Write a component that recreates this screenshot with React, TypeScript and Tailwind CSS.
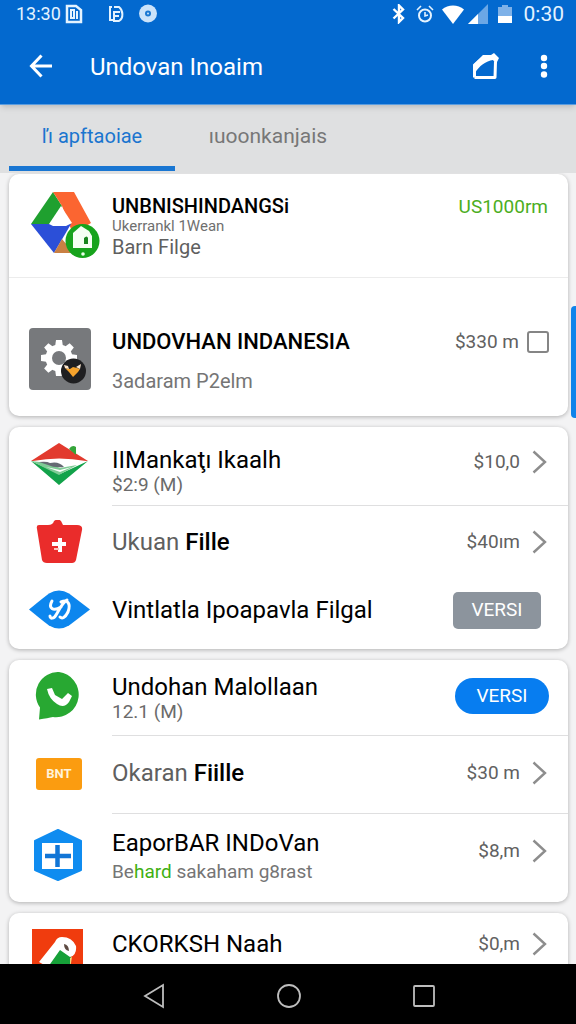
import { ReactNode } from "react";
import clsx from "clsx";

const tabs = [
  { id: "app", label: "ľı apftaoiae", active: true },
  { id: "other", label: "ıuoonkanjais", active: false },
];

function StatusBar() {
  return (
    <div className="h-7 pl-4 pr-3 flex items-center justify-between text-lg leading-7 text-[#e4f3ff]">
      <div className="flex items-center">
        <span className="w-[49px]">13:30</span>
        <svg width="18" height="20" viewBox="0 0 18 20" fill="none">
          <path d="M2 2h9l5 4v12H2z" stroke="currentColor" strokeWidth="2.500" />
          <path d="M6 6v8h3V6zM12 7v8" stroke="currentColor" strokeWidth="2" />
        </svg>
        <svg className="ml-6" width="18" height="20" viewBox="0 0 18 20" fill="none">
          <path d="M5 3H3v13h3M7 3h5c4 3 5 11 0 14H7V8h6M7 12h5" stroke="currentColor" strokeWidth="2" />
        </svg>
        <svg className="ml-3" width="20" height="20" viewBox="0 0 20 20">
          <circle cx="11" cy="9.500" r="9" fill="#cbe3fa" />
          <circle cx="11" cy="9.500" r="3" fill="#1b78d2" />
          <circle cx="11" cy="9.500" r="1" fill="#cbe3fa" />
        </svg>
      </div>
      <div className="flex items-center">
        <svg width="14" height="20" viewBox="0 0 14 20" fill="none" stroke="#fff" strokeWidth="2.400">
          <path d="M1.500 5l9.500 9-4 4V1.500l4 4L1.500 14.500" />
        </svg>
        <svg className="ml-2.5" width="18" height="20" viewBox="0 0 18 20" fill="none" stroke="currentColor" strokeWidth="2">
          <circle cx="9" cy="11.500" r="6" />
          <path d="M1 6l4-4M13 2l4 4M9 8v4l3-1" strokeWidth="1.600" />
        </svg>
        <svg className="ml-2" width="22" height="19" viewBox="0 0 22 19">
          <path d="M0 4.500C6-.8 16-.8 22 4.500L11 19z" fill="#fff" />
        </svg>
        <svg className="ml-1" width="20" height="20" viewBox="0 0 20 20">
          <path d="M20 0v20H0z" fill="#6ba7e6" />
          <path d="M10 10v10H0z" fill="#fff" />
        </svg>
        <svg className="ml-2.5 mr-3" width="14" height="20" viewBox="0 0 14 20">
          <path d="M0 3h4V1h6v2h4v16H0z" fill="#7eb1e8" />
          <path d="M0 12h14v7H0z" fill="#fff" />
        </svg>
        <span className="text-[21px] leading-7">0:30</span>
      </div>
    </div>
  );
}

function Header() {
  return (
    <header className="relative bg-[#0369cf] text-white border-b border-[#5b9ddf] shadow-md">
      <StatusBar />
      <div className="h-[76px] pt-0.5 pl-7 pr-4 flex items-center">
        <button type="button" aria-label="Back">
          <svg width="26" height="26" viewBox="0 0 26 26" fill="none" stroke="currentColor" strokeWidth="3">
            <path d="M24 12H4M13.500 1.500L3.500 12l10 10.500" />
          </svg>
        </button>
        <h1 className="ml-9 flex-1 text-2xl leading-8">Undovan Inoaim</h1>
        <button type="button" aria-label="Edit">
          <svg width="28" height="28" viewBox="0 0 28 28" fill="none" stroke="currentColor">
            <path d="M2.500 24.500V12L12 3.500h8M2.500 24.500h20.500l.5-16" strokeWidth="3" strokeLinejoin="round" />
            <path d="M1 12L11 2h8l3-2 5 5-3 6-3-4C14 8 7 13 3 20z" fill="currentColor" stroke="none" />
          </svg>
        </button>
        <button type="button" aria-label="More" className="ml-7">
          <svg width="32" height="26" viewBox="0 0 32 26" fill="currentColor">
            <circle cx="16" cy="4" r="3.200" />
            <circle cx="16" cy="12" r="3.200" />
            <circle cx="16" cy="20.500" r="3.200" />
          </svg>
        </button>
      </div>
    </header>
  );
}

function DriveIcon() {
  return (
    <svg width="72" height="68" viewBox="0 0 72 68">
      <path d="M24 0L2 32l8 2h12l11-20z" fill="#1fa02f" />
      <path d="M24 0h21l17 31-10 6H42L33 14z" fill="#fb6531" />
      <path d="M2 32h40L25 61z" fill="#2b4fd8" />
      <path d="M25 61l8-14 12 14z" fill="#c98043" />
      <path d="M32 14l11 17-6 3H24l-4-2z" fill="#fff" />
      <circle cx="53.500" cy="49" r="17" fill="#17a31c" />
      <path d="M44 41l8-7 8 5 3 5v12H44z" fill="#f4fff2" />
      <path d="M55 46q3-3 4 0v6h-4z" fill="#17851c" />
      <circle cx="54" cy="62" r="1.800" fill="#eaffea" />
    </svg>
  );
}

function GearIcon() {
  return (
    <svg width="72" height="64" viewBox="0 0 72 64">
      <rect x="0" y="1" width="62" height="62" rx="4" fill="#77797c" />
      <g transform="translate(30 31)" fill="#fff">
        <circle r="13.500" />
        <path d="M-4-11l1-7h6l1 7z" />
        <path d="M-4-11l1-7h6l1 7z" transform="rotate(45)" />
        <path d="M-4-11l1-7h6l1 7z" transform="rotate(90)" />
        <path d="M-4-11l1-7h6l1 7z" transform="rotate(135)" />
        <path d="M-4-11l1-7h6l1 7z" transform="rotate(180)" />
        <path d="M-4-11l1-7h6l1 7z" transform="rotate(225)" />
        <path d="M-4-11l1-7h6l1 7z" transform="rotate(270)" />
        <path d="M-4-11l1-7h6l1 7z" transform="rotate(315)" />
        <circle r="7" fill="#77797c" />
      </g>
      <circle cx="44.500" cy="44" r="12.500" fill="#1f1f21" />
      <path d="M36 41l5 1 3-2 4 1 3 1-2 3-5 5-4-5z" fill="#f6a32c" />
      <path d="M35 38l4 1 1 3-4-1zM47 40l5-3-1 5z" fill="#fbe6cf" />
    </svg>
  );
}

function KiteIcon() {
  return (
    <svg width="72" height="44" viewBox="0 0 72 44">
      <path d="M30 0l29 18H2z" fill="#e23a2e" />
      <path d="M2 18l28 24 29-24-28 13z" fill="#12a24a" />
      <path d="M4 18q26-5 53 0L30 30z" fill="#fff" />
      <path d="M2 18l17 2 12 5 17-3-18 10z" fill="#7fcb95" />
      <path d="M10 19q8-1 11 1 9-2 14 4-10 1-16-2z" fill="#656a73" />
      <path d="M17 24l14 5 12-5-12 3z" fill="#fff" />
      <path d="M40 6q3-5 7-2v8z" fill="#35a53a" />
    </svg>
  );
}

function BasketIcon() {
  return (
    <svg width="72" height="44" viewBox="0 0 72 44">
      <path
        d="M10 5h9q5 0 6-4 4-3 7 0l2 4h14q6 0 5 5l-6 30q-1 3-4 3H18q-4 0-5-3L8 9q-1-4 2-4z"
        fill="#ea2c2b"
      />
      <path d="M23 24h14M31 18v14" stroke="#fff" strokeWidth="4" />
      <path d="M25 29h5" stroke="#ffc4bd" strokeWidth="2" />
    </svg>
  );
}

function EyeIcon() {
  return (
    <svg width="72" height="40" viewBox="0 0 72 40">
      <path d="M0 19.500Q14 8 20 3.500q10-6 20 0Q46 8 61 19.500 46 31 40 35.500q-10 6-20 0Q14 31 0 19.500z" fill="#0c86ee" />
      <path
        d="M23 11c-4 7 1 11 9 6M38 10c-5 3-8 10-11 15-2 4-6 4-6 1M32 12c7-3 10 2 7 10-3 6-6 7-8 5"
        fill="none"
        stroke="#fff"
        strokeWidth="3"
        strokeLinecap="round"
      />
    </svg>
  );
}

function ChatIcon() {
  return (
    <svg width="72" height="48" viewBox="0 0 72 48">
      <path d="M30 0a22.500 22.500 0 1 1-6 45q-5 1-14 2.500l1-12A22.500 22.500 0 0 1 30 0z" fill="#28a832" />
      <path d="M18 17l5-1 3 7 7 4 6-6 4 3-3 6q-5 7-12 2-8-5-10-15z" fill="#fff" />
    </svg>
  );
}

function TicketIcon() {
  return (
    <div className="ml-[7px] h-8 w-[46px] rounded-[3px] bg-[#fb9c10] text-center text-[13px] font-bold leading-8 text-[#fff3da]">
      BNT
    </div>
  );
}

function HexagonIcon() {
  return (
    <svg width="72" height="54" viewBox="0 0 72 54">
      <path d="M29 2l23 11v29L29 52 6 42V13z" fill="#0f8cf0" stroke="#0f8cf0" strokeWidth="2" strokeLinejoin="round" />
      <path d="M13 15h31v26H13z" fill="#fff" />
      <path d="M16 28h26M28.500 17v22" stroke="#1276d6" strokeWidth="4.500" />
    </svg>
  );
}

function BirdIcon() {
  return (
    <svg width="72" height="54" viewBox="0 0 72 54">
      <path d="M3 0h51v54H3z" fill="#f03c0e" />
      <path d="M24 22l18-4v36H14z" fill="#16a038" />
      <path d="M10 33l16-20Q28 8 33 8q10 0 14 9 1 9-6 11l-10-7-12 17z" fill="#fff" />
      <path d="M35 15q5 1 5 7-5-1-5-7z" fill="#5d4a42" />
      <path d="M41 29l2-1-2 12z" fill="#f7d77c" />
    </svg>
  );
}

function Chevron() {
  return (
    <svg className="ml-3" width="16" height="24" viewBox="0 0 16 24" fill="none" stroke="#8d8d8d" strokeWidth="2.400">
      <path d="M1.500 1.500L13 12 1.500 22.500" />
    </svg>
  );
}

type PriceProps = { children: ReactNode };

function Price({ children }: PriceProps) {
  return (
    <button type="button" className="flex items-center text-[19px] leading-[30px] text-[#616161]">
      {children}
      <Chevron />
    </button>
  );
}

type RowProps = {
  icon: ReactNode;
  trailing: ReactNode;
  children: ReactNode;
  className: string;
  divider?: boolean;
};

function Row({ icon, trailing, children, className, divider }: RowProps) {
  return (
    <li className={clsx("flex pl-5", className)}>
      <div className="w-[83px] shrink-0">{icon}</div>
      <div
        className={clsx(
          "flex flex-1 items-start justify-between pr-5",
          divider && "self-stretch border-b border-[#dfdfe0]"
        )}
      >
        {children}
        {trailing}
      </div>
    </li>
  );
}

function Card({ children }: { children: ReactNode }) {
  return <ul className="rounded-[10px] bg-white shadow-[0_1px_4px_rgba(0,0,0,0.28)]">{children}</ul>;
}

const titleStyle = "text-2xl leading-[30px] text-black";
const subtitleStyle = "text-[19px] leading-5 text-[#6b6b6b]";

export default function App() {
  return (
    <div className="h-screen flex flex-col overflow-hidden bg-[#f3f3f4] font-['Roboto',sans-serif]">
      <Header />

      <nav className="h-[68px] shrink-0 pl-[9px] flex bg-[#dfe0e1]">
        {tabs.map((tab) => (
          <a
            key={tab.id}
            href={`#${tab.id}`}
            className={clsx(
              "h-[66px] pt-4 text-center leading-[30px]",
              tab.active
                ? "w-[166px] border-b-[5px] border-[#1976d2] text-xl text-[#1b75cf]"
                : "w-[186px] text-[21px] text-[#777]"
            )}
          >
            {tab.label}
          </a>
        ))}
      </nav>

      <main className="relative min-h-0 flex-1 overflow-hidden">
        <div className="flex flex-col gap-[11px] pl-[9px] pr-2 pt-px">
          <Card>
            <li className="h-[104px] pt-5 pl-5 pr-5 flex items-start border-b border-[#ececec]">
              <div className="w-[83px] -mt-0.5 shrink-0">
                <DriveIcon />
              </div>
              <div className="flex-1">
                <h2 className="text-xl leading-6 font-medium text-black">UNBNISHINDANGSi</h2>
                <p className="text-[15px] leading-4 text-[#6f6f6f]">Ukerrankl 1Wean</p>
                <p className="text-xl leading-[26px] text-[#5f5f5f]">Barn Filge</p>
              </div>
              <span className="text-[19px] leading-[26px] text-[#4cae1e]">US1000rm</span>
            </li>
            <Row
              className="h-[138px] pt-[49px]"
              icon={<GearIcon />}
              trailing={
                <label className="-mr-px flex items-center gap-2 text-[19px] leading-[30px] text-[#616161]">
                  $330 m
                  <input
                    type="checkbox"
                    className="size-[22px] appearance-none rounded-[3px] border-2 border-[#858585] bg-white checked:bg-[#0b7cf0]"
                  />
                </label>
              }
            >
              <div>
                <h2 className="text-[22px] leading-[30px] font-medium text-black">UNDOVHAN INDANESIA</h2>
                <p className="mt-3 text-xl leading-6 text-[#757575]">3adaram P2elm</p>
              </div>
            </Row>
          </Card>

          <Card>
            <Row className="h-[79px] pt-4" divider icon={<KiteIcon />} trailing={<div className="pt-1"><Price>$10,0</Price></div>}>
              <div className="pt-0.5">
                <h2 className={titleStyle}>IIMankaţı Ikaalh</h2>
                <p className={subtitleStyle}>$2:9 (M)</p>
              </div>
            </Row>
            <Row className="h-[72px] items-center" icon={<BasketIcon />} trailing={<Price>$40ım</Price>}>
              <h2 className={titleStyle}>
                <span className="text-[#5f5f5f]">Ukuan</span> <span className="font-medium">Fille</span>
              </h2>
            </Row>
            <Row
              className="h-[71px] items-center pb-[7px]"
              icon={<EyeIcon />}
              trailing={
                <button type="button" className="mr-[7px] h-[37px] w-[88px] rounded-[5px] bg-[#8c949d] text-[19px] leading-7 text-white">
                  VERSI
                </button>
              }
            >
              <h2 className={clsx(titleStyle, "self-center")}>Vintlatla Ipoapavla Filgal</h2>
            </Row>
          </Card>

          <Card>
            <Row
              className="h-[76px] pt-3"
              divider
              icon={<ChatIcon />}
              trailing={
                <div className="-mr-px pt-1.5">
                  <button type="button" className="h-9 w-[94px] rounded-full bg-[#077df0] text-[19px] leading-7 text-white">
                    VERSI
                  </button>
                </div>
              }
            >
              <div>
                <h2 className={titleStyle}>Undohan Malollaan</h2>
                <p className={subtitleStyle}>12.1 (M)</p>
              </div>
            </Row>
            <Row className="h-[78px] pt-[22px]" divider icon={<TicketIcon />} trailing={<Price>$30 m</Price>}>
              <h2 className={titleStyle}>
                <span className="text-[#5f5f5f]">Okaran</span> <span className="font-medium">Fiille</span>
              </h2>
            </Row>
            <Row className="h-[88px] pt-3.5" icon={<HexagonIcon />} trailing={<div className="pt-2"><Price>$8,m</Price></div>}>
              <div>
                <h2 className={titleStyle}>EaporBAR INDoVan</h2>
                <p className="mt-0.5 text-[19px] leading-6 text-[#757575]">
                  Be<span className="text-[#3fb012]">hard</span> sakaham g8rast
                </p>
              </div>
            </Row>
          </Card>

          <Card>
            <Row className="h-20 pt-4" icon={<BirdIcon />} trailing={<Price>$0,m</Price>}>
              <h2 className={titleStyle}>CKORKSH Naah</h2>
            </Row>
          </Card>
        </div>

        {/* scroll thumb */}
        <div className="absolute right-0 top-[133px] h-28 w-[5px] rounded-l-sm bg-[#0f83ea]" />
      </main>

      <footer className="h-[60px] shrink-0 flex items-center justify-center bg-black pt-1 pl-0.5 text-[#bdbdbd]">
        <button type="button" aria-label="Back" className="w-[135px] flex justify-center">
          <svg width="24" height="26" viewBox="0 0 24 26" fill="none" stroke="currentColor" strokeWidth="1.800">
            <path d="M21 2v22L3 13z" />
          </svg>
        </button>
        <button type="button" aria-label="Home" className="w-[135px] flex justify-center">
          <svg width="26" height="26" viewBox="0 0 26 26" fill="none" stroke="currentColor" strokeWidth="1.800">
            <circle cx="13" cy="13" r="11" />
          </svg>
        </button>
        <button type="button" aria-label="Recent apps" className="w-[135px] flex justify-center">
          <svg width="24" height="24" viewBox="0 0 24 24" fill="none" stroke="currentColor" strokeWidth="1.800">
            <rect x="2" y="2" width="20" height="20" rx="1" />
          </svg>
        </button>
      </footer>
    </div>
  );
}
